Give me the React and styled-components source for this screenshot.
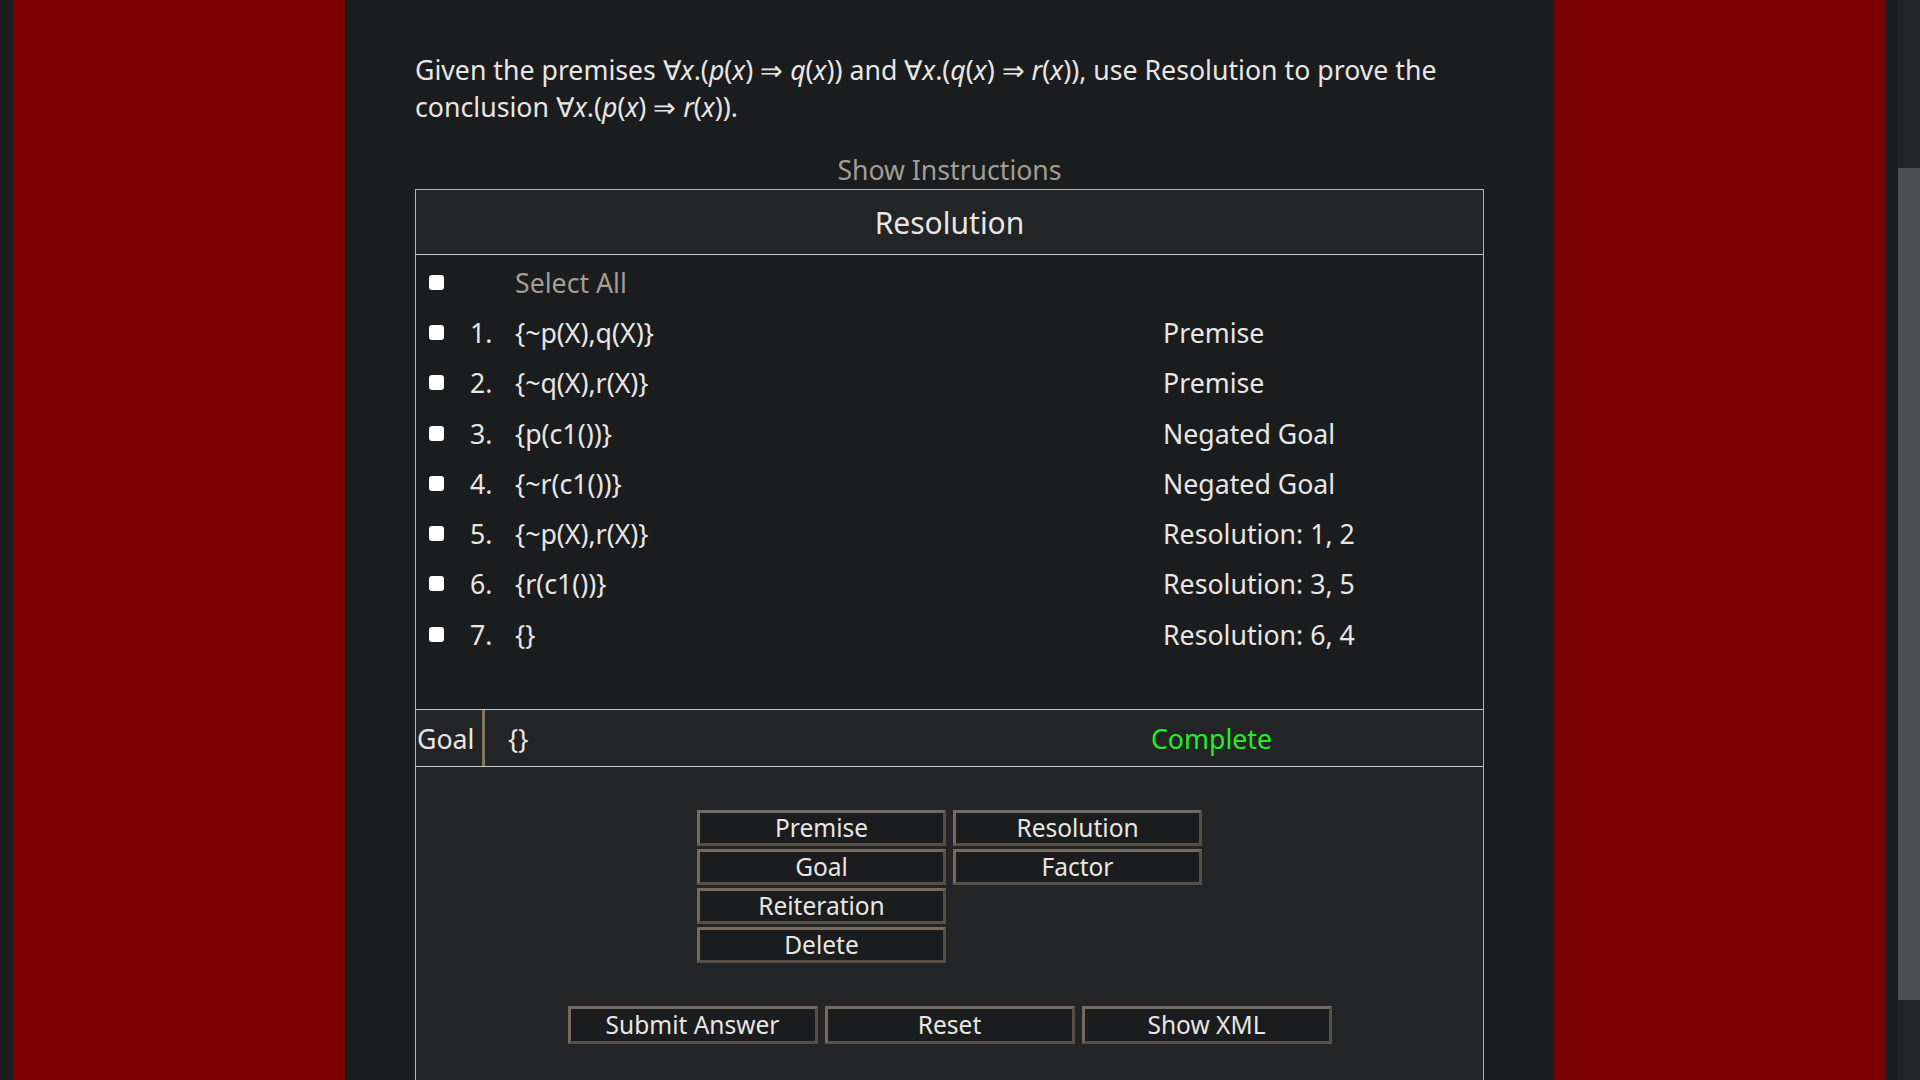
import React from 'react';
import styled, { createGlobalStyle } from 'styled-components';

/*──────── palette ───────────────────────────────────────────*/
const BG      = '#1b1c1e';
const BG_ALT  = '#222426';
const FG      = '#e8e6e3';
const MUTED   = '#a39d93';
const RED     = '#7a0000';
const RULE    = '#c4c4c4';

const Global = createGlobalStyle`
  html,body{margin:0;height:100%;overflow:hidden;background:${BG};}
  body{font-family:"Noto Sans","Open Sans",sans-serif;color:${FG};}
  #root{height:100%;}
`;

/*──────── shell ─────────────────────────────────────────────*/
const Shell = styled.div`
  display:flex;height:100vh;
`;
const Page = styled.div`
  flex:1;display:flex;padding:0 12px 0 13px;background:${BG};min-width:0;
`;
const Side = styled.div`
  flex:0 0 332px;background:${RED};
`;
const Main = styled.main`
  flex:1;min-width:0;background:${BG};padding:51px 70px 0;
`;
const Track = styled.div`
  flex:0 0 22px;background:#222526;padding-top:168px;
`;
const Thumb = styled.div`
  height:832px;background:#4a4f50;
`;

/*──────── prompt ────────────────────────────────────────────*/
const Prompt = styled.p`
  margin:0;font-size:26.7px;line-height:37px;
  i{font-style:italic;}
`;
const Toggle = styled.div`
  margin-top:27px;text-align:center;font-size:26.6px;line-height:37px;color:${MUTED};
`;

/*──────── proof panel ───────────────────────────────────────*/
const Panel = styled.section`
  border:1px solid #b4b4b4;background:${BG};
`;
const Header = styled.h2`
  margin:0;height:64px;display:flex;align-items:center;justify-content:center;
  background:${BG_ALT};border-bottom:1px solid ${RULE};
  font-weight:400;font-size:30px;
`;
const List = styled.div`
  padding:2px 0 50px;
`;
const Row = styled.div`
  display:grid;grid-template-columns:41px 45px 648px 1fr;align-items:center;
  height:50.3px;padding-left:13px;font-size:26.7px;
  color:${p => (p.$muted ? MUTED : FG)};
`;
const Box = styled.span`
  width:15px;height:15px;border-radius:3px;background:#fff;
`;
const GoalRow = styled.div`
  display:flex;align-items:center;height:56px;background:${BG_ALT};
  border-top:1px solid ${RULE};border-bottom:1px solid ${RULE};font-size:26.7px;
`;
const GoalLabel = styled.span`
  width:65px;padding-left:1px;align-self:stretch;display:flex;align-items:center;
  border-right:3px solid #7d7668;
`;
const GoalClause = styled.span`
  width:643px;padding-left:23px;
`;
const Status = styled.span`
  color:#22ee22;
`;

/*──────── controls ──────────────────────────────────────────*/
const Controls = styled.div`
  background:${BG_ALT};padding:43px 0 60px;
  display:flex;flex-direction:column;align-items:center;gap:43px;
`;
const RuleGrid = styled.div`
  display:grid;grid-template-columns:249px 249px;column-gap:7px;row-gap:3px;
`;
const ActionRow = styled.div`
  display:flex;gap:7px;
`;
const Btn = styled.button`
  height:${p => p.$h || 36}px;width:${p => p.$w || 249}px;padding:0;
  background:${BG};color:${FG};
  border:3px solid;border-color:#736b60 #564f46 #564f46 #736b60;
  font-family:"Noto Sans","Open Sans",sans-serif;font-size:24.5px;line-height:1;
  grid-column:${p => p.$col || 'auto'};
`;

const ROWS = [
  ['1.', '{~p(X),q(X)}', 'Premise'],
  ['2.', '{~q(X),r(X)}', 'Premise'],
  ['3.', '{p(c1())}', 'Negated Goal'],
  ['4.', '{~r(c1())}', 'Negated Goal'],
  ['5.', '{~p(X),r(X)}', 'Resolution: 1, 2'],
  ['6.', '{r(c1())}', 'Resolution: 3, 5'],
  ['7.', '{}', 'Resolution: 6, 4'],
];

export default function App() {
  return (
    <Shell>
      <Global />
      <Page>
        <Side />
        <Main>
          <Prompt>
            Given the premises ∀<i>x</i>.(<i>p</i>(<i>x</i>) ⇒ <i>q</i>(<i>x</i>)) and
            ∀<i>x</i>.(<i>q</i>(<i>x</i>) ⇒ <i>r</i>(<i>x</i>)), use Resolution to prove the
            conclusion ∀<i>x</i>.(<i>p</i>(<i>x</i>) ⇒ <i>r</i>(<i>x</i>)).
          </Prompt>
          <Toggle>Show Instructions</Toggle>

          <Panel>
            <Header>Resolution</Header>
            <List>
              <Row $muted>
                <Box />
                <span />
                <span>Select All</span>
              </Row>
              {ROWS.map(([n, clause, why]) => (
                <Row key={n}>
                  <Box />
                  <span>{n}</span>
                  <span>{clause}</span>
                  <span>{why}</span>
                </Row>
              ))}
            </List>

            <GoalRow>
              <GoalLabel>Goal</GoalLabel>
              <GoalClause>{'{}'}</GoalClause>
              <Status>Complete</Status>
            </GoalRow>

            <Controls>
              <RuleGrid>
                <Btn>Premise</Btn>
                <Btn>Resolution</Btn>
                <Btn>Goal</Btn>
                <Btn>Factor</Btn>
                <Btn $col="1">Reiteration</Btn>
                <Btn $col="1">Delete</Btn>
              </RuleGrid>
              <ActionRow>
                <Btn $w={250} $h={38}>Submit Answer</Btn>
                <Btn $w={250} $h={38}>Reset</Btn>
                <Btn $w={250} $h={38}>Show XML</Btn>
              </ActionRow>
            </Controls>
          </Panel>
        </Main>
        <Side />
      </Page>
      <Track><Thumb /></Track>
    </Shell>
  );
}
